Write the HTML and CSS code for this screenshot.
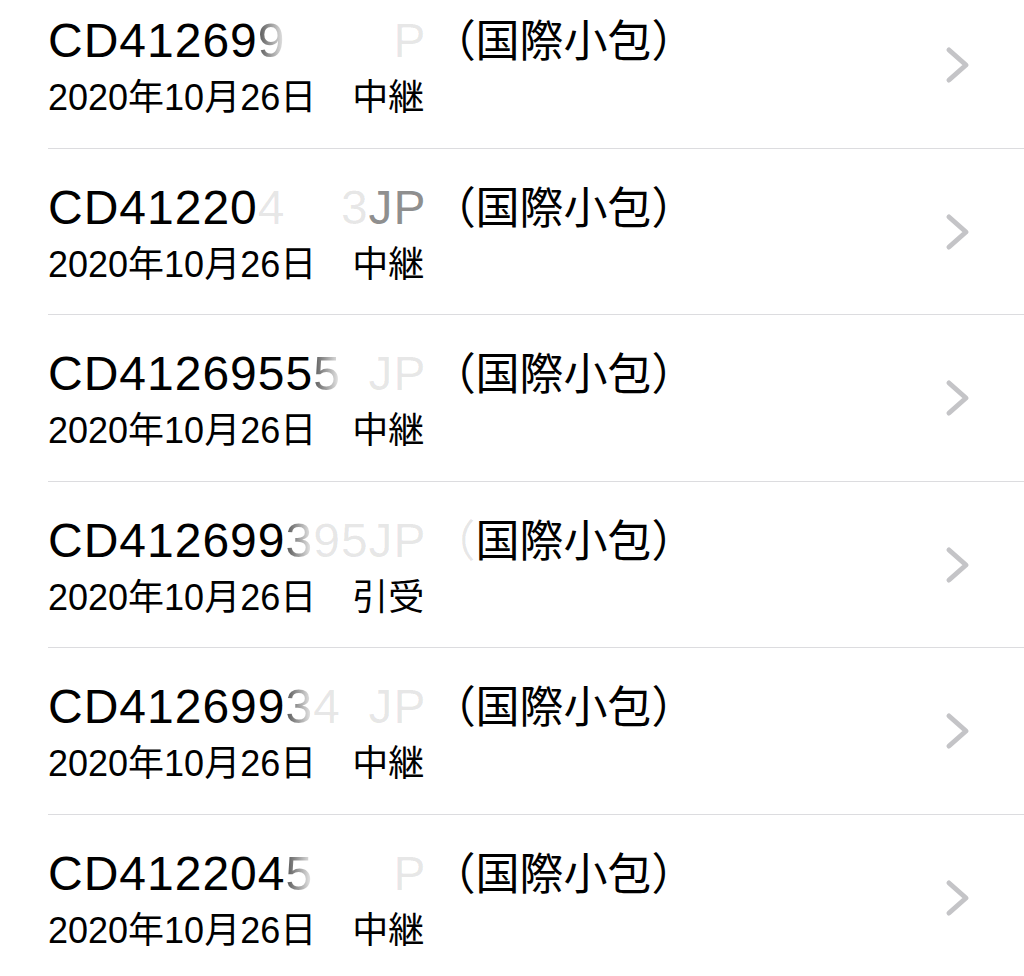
FILE: index.html
```html
<!DOCTYPE html>
<html lang="ja">
<head>
    <meta charset="utf-8" />
    <title>追跡一覧</title>
    <link rel="stylesheet" href="styles.css">
</head>
<body>

<ul class="list">
    <li class="row">
        <div class="text">
            <p class="title"><span class="num">CD41269<span class="f1">9</span><span class="f3">381J</span><span class="f2">P</span></span><span class="kind">（国際小包）</span></p>
            <p class="sub">2020年10月26日　中継</p>
        </div>
        <svg class="arrow" width="30" height="40" viewBox="0 0 30 40"><polyline points="5,4 22,19 5,34" /></svg>
    </li>
    <li class="row">
        <div class="text">
            <p class="title"><span class="num">CD41220<span class="f2">4</span><span class="f3">77</span><span class="f2">3</span><span class="f1b">JP</span></span><span class="kind">（国際小包）</span></p>
            <p class="sub">2020年10月26日　中継</p>
        </div>
        <svg class="arrow" width="30" height="40" viewBox="0 0 30 40"><polyline points="5,4 22,19 5,34" /></svg>
    </li>
    <li class="row">
        <div class="text">
            <p class="title"><span class="num">CD4126955<span class="f1">5</span><span class="f3">5</span><span class="f2">JP</span></span><span class="kind">（国際小包）</span></p>
            <p class="sub">2020年10月26日　中継</p>
        </div>
        <svg class="arrow" width="30" height="40" viewBox="0 0 30 40"><polyline points="5,4 22,19 5,34" /></svg>
    </li>
    <li class="row">
        <div class="text">
            <p class="title"><span class="num">CD412699<span class="f1">3</span><span class="f2">95JP</span></span><span class="kind"><span class="f2">（</span>国際小包）</span></p>
            <p class="sub">2020年10月26日　引受</p>
        </div>
        <svg class="arrow" width="30" height="40" viewBox="0 0 30 40"><polyline points="5,4 22,19 5,34" /></svg>
    </li>
    <li class="row">
        <div class="text">
            <p class="title"><span class="num">CD412699<span class="f1">3</span><span class="f2">4</span><span class="f3">2</span><span class="f2">JP</span></span><span class="kind">（国際小包）</span></p>
            <p class="sub">2020年10月26日　中継</p>
        </div>
        <svg class="arrow" width="30" height="40" viewBox="0 0 30 40"><polyline points="5,4 22,19 5,34" /></svg>
    </li>
    <li class="row">
        <div class="text">
            <p class="title"><span class="num">CD412204<span class="f1">5</span><span class="f3">61J</span><span class="f2">P</span></span><span class="kind">（国際小包）</span></p>
            <p class="sub">2020年10月26日　中継</p>
        </div>
        <svg class="arrow" width="30" height="40" viewBox="0 0 30 40"><polyline points="5,4 22,19 5,34" /></svg>
    </li>
</ul>

</body>
</html>
```

FILE: styles.css
```css
* { padding: 0; margin: 0; }
li { list-style: none; }

body { background: #ffffff; font-family: "Liberation Sans", "Noto Sans CJK JP", sans-serif; color: #000000; overflow: hidden; }

.list { margin-top: -18px; padding-left: 48px; }
.row { height: 166.5px; box-sizing: border-box; border-bottom: 1.5px solid #dcdcdf; display: flex; align-items: flex-start; padding-right: 50px; }

.text { flex: 1; padding-top: 31px; }
.title { font-size: 48px; line-height: 56px; white-space: nowrap; }
.num { letter-spacing: 1px; }
.kind { font-size: 44px; margin-left: 5px; }
.sub { font-size: 36px; line-height: 44px; margin-top: 6px; }

/* blurred part of the number */
.f1 { background: linear-gradient(to right, #555555, #f2f2f2); -webkit-background-clip: text; background-clip: text; color: transparent; }
.f1b { color: rgba(0, 0, 0, 0.45); }
.f2 { color: rgba(0, 0, 0, 0.1); }
.f3 { color: rgba(0, 0, 0, 0.02); }

.arrow { margin-top: 64px; }
.arrow polyline { fill: none; stroke: #c4c4c7; stroke-width: 5; stroke-linecap: round; stroke-linejoin: round; }
```
